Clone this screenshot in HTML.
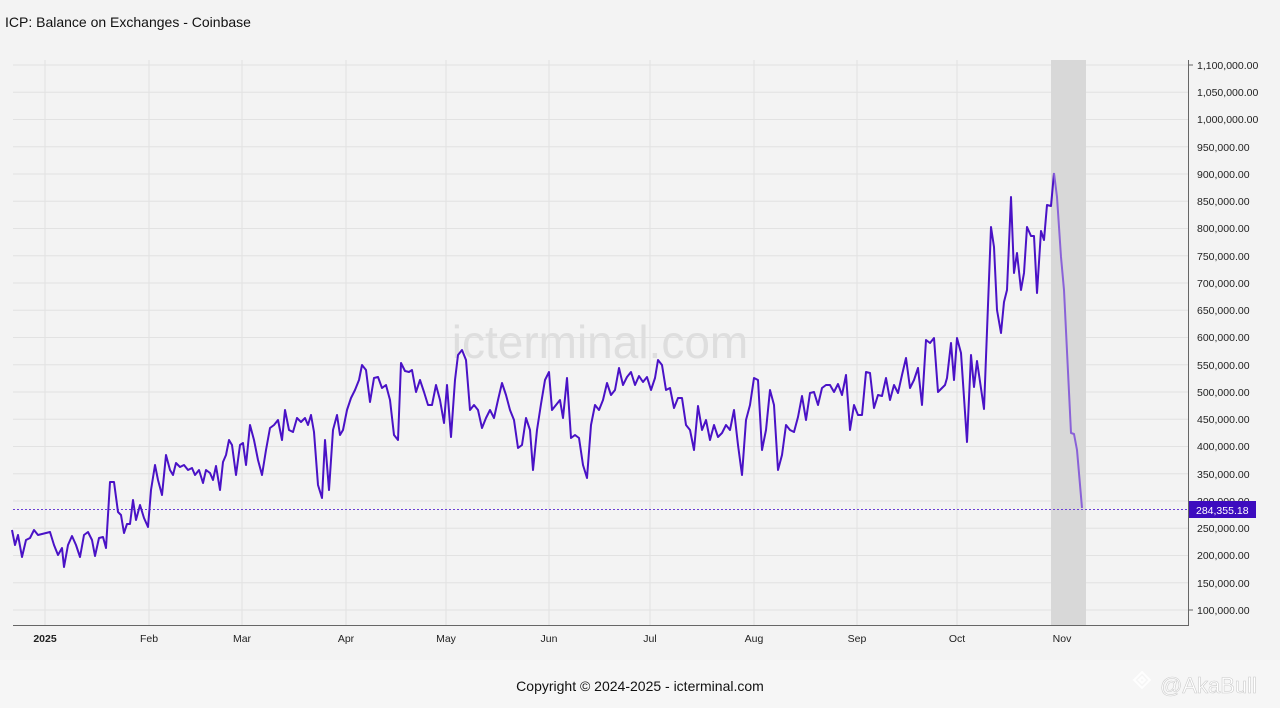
<!DOCTYPE html>
<html><head><meta charset="utf-8"><style>
html,body{margin:0;padding:0;width:1280px;height:708px;overflow:hidden;background:#f3f3f3;font-family:"Liberation Sans",sans-serif}
</style></head><body>
<svg width="1280" height="708" xmlns="http://www.w3.org/2000/svg" style="display:block">
<rect x="0" y="0" width="1280" height="660" fill="#f3f3f3"/>
<rect x="0" y="660" width="1280" height="48" fill="#f6f6f6"/>
<text x="5" y="27" font-size="14" fill="#111">ICP: Balance on Exchanges - Coinbase</text>
<g stroke="#e2e2e2" stroke-width="1">
<line x1="13" y1="65" x2="1188" y2="65"/><line x1="13" y1="92.25" x2="1188" y2="92.25"/><line x1="13" y1="119.5" x2="1188" y2="119.5"/><line x1="13" y1="146.75" x2="1188" y2="146.75"/><line x1="13" y1="174" x2="1188" y2="174"/><line x1="13" y1="201.25" x2="1188" y2="201.25"/><line x1="13" y1="228.5" x2="1188" y2="228.5"/><line x1="13" y1="255.75" x2="1188" y2="255.75"/><line x1="13" y1="283" x2="1188" y2="283"/><line x1="13" y1="310.25" x2="1188" y2="310.25"/><line x1="13" y1="337.5" x2="1188" y2="337.5"/><line x1="13" y1="364.75" x2="1188" y2="364.75"/><line x1="13" y1="392" x2="1188" y2="392"/><line x1="13" y1="419.25" x2="1188" y2="419.25"/><line x1="13" y1="446.5" x2="1188" y2="446.5"/><line x1="13" y1="473.75" x2="1188" y2="473.75"/><line x1="13" y1="501" x2="1188" y2="501"/><line x1="13" y1="528.25" x2="1188" y2="528.25"/><line x1="13" y1="555.5" x2="1188" y2="555.5"/><line x1="13" y1="582.75" x2="1188" y2="582.75"/><line x1="13" y1="610" x2="1188" y2="610"/>
<line x1="45" y1="60" x2="45" y2="625"/><line x1="149" y1="60" x2="149" y2="625"/><line x1="242" y1="60" x2="242" y2="625"/><line x1="346" y1="60" x2="346" y2="625"/><line x1="446" y1="60" x2="446" y2="625"/><line x1="549" y1="60" x2="549" y2="625"/><line x1="650" y1="60" x2="650" y2="625"/><line x1="754" y1="60" x2="754" y2="625"/><line x1="857" y1="60" x2="857" y2="625"/><line x1="957" y1="60" x2="957" y2="625"/><line x1="1062" y1="60" x2="1062" y2="625"/>
</g>
<rect x="1051" y="60" width="35" height="565" fill="#d8d8d8"/>
<text x="600" y="358" font-size="46" fill="#dedede" text-anchor="middle">icterminal.com</text>
<line x1="13" y1="625.5" x2="1189" y2="625.5" stroke="#666" stroke-width="1"/>
<line x1="1188.5" y1="60" x2="1188.5" y2="626" stroke="#666" stroke-width="1"/>
<g font-size="10.5" fill="#222">
<text x="1197" y="69">1,100,000.00</text><text x="1197" y="96">1,050,000.00</text><text x="1197" y="123">1,000,000.00</text><text x="1197" y="151">950,000.00</text><text x="1197" y="178">900,000.00</text><text x="1197" y="205">850,000.00</text><text x="1197" y="232">800,000.00</text><text x="1197" y="260">750,000.00</text><text x="1197" y="287">700,000.00</text><text x="1197" y="314">650,000.00</text><text x="1197" y="341">600,000.00</text><text x="1197" y="369">550,000.00</text><text x="1197" y="396">500,000.00</text><text x="1197" y="423">450,000.00</text><text x="1197" y="450">400,000.00</text><text x="1197" y="478">350,000.00</text><text x="1197" y="505">300,000.00</text><text x="1197" y="532">250,000.00</text><text x="1197" y="559">200,000.00</text><text x="1197" y="587">150,000.00</text><text x="1197" y="614">100,000.00</text>
</g>
<g stroke="#666"><line x1="1189" y1="65" x2="1193" y2="65"/><line x1="1189" y1="610" x2="1193" y2="610"/></g>
<g font-size="10.5" fill="#222" text-anchor="middle">
<text x="45" y="642" font-weight="bold">2025</text><text x="149" y="642">Feb</text><text x="242" y="642">Mar</text><text x="346" y="642">Apr</text><text x="446" y="642">May</text><text x="549" y="642">Jun</text><text x="650" y="642">Jul</text><text x="754" y="642">Aug</text><text x="857" y="642">Sep</text><text x="957" y="642">Oct</text><text x="1062" y="642">Nov</text>
</g>
<line x1="13" y1="509.5" x2="1189" y2="509.5" stroke="#6a3fd6" stroke-width="1" stroke-dasharray="2,2"/>
<polyline fill="none" stroke="#4a12c6" stroke-width="2" stroke-linejoin="round" points="12,530 15,545 18,535 22,557 26,540 30,538 34,530 38,535 50,532 54,545 58,555 62,548 64,567 68,545 72,536 76,545 80,557 84,535 88,532 92,540 95,556 99,538 103,537 106,548 110,482 114,482 118,512 121,515 124,533 127,524 130,524 133,500 136,520 140,505 144,518 148,527 151,490 155,465 158,480 162,495 166,455 170,470 173,475 176,463 180,467 184,465 188,470 192,468 195,475 199,470 203,483 206,470 210,473 213,480 216,466 220,490 223,462 226,455 229,440 232,445 236,475 240,445 243,443 246,465 250,425 254,440 258,460 262,475 266,450 270,428 274,425 278,420 282,440 285,410 289,430 293,432 297,418 301,422 305,418 308,425 311,415 314,432 318,485 322,498 325,440 329,490 333,430 337,415 340,435 343,430 347,410 351,398 355,390 359,380 362,365 366,370 370,402 374,378 378,377 382,388 386,385 390,400 394,435 398,440 401,363 405,371 409,372 412,370 416,392 420,380 424,392 428,405 432,405 436,385 440,400 444,423 447,385 451,437 455,380 458,355 462,350 466,360 470,410 474,405 478,410 482,428 486,418 490,410 494,418 498,400 502,383 506,395 510,410 514,420 518,448 522,445 526,418 530,430 533,470 537,430 541,404 545,380 549,372 552,410 556,405 560,400 563,418 567,378 571,438 575,435 579,438 583,465 587,478 591,425 595,405 599,410 603,400 607,383 611,395 615,390 619,368 623,385 627,377 631,372 635,385 639,376 643,382 647,377 651,390 655,378 658,360 662,365 666,390 670,388 674,408 678,398 682,398 686,425 690,430 694,450 698,406 702,430 706,420 710,440 714,425 718,437 722,433 726,425 730,430 734,410 738,445 742,475 746,420 750,405 754,378 758,380 762,450 766,430 770,390 774,405 778,470 782,455 786,425 790,430 794,432 798,417 802,396 806,420 810,393 814,392 818,405 822,388 826,385 830,385 834,392 838,384 842,395 846,375 850,430 854,405 858,415 862,415 866,372 870,373 874,408 878,395 882,396 886,378 890,400 894,385 898,393 902,375 906,358 910,388 914,380 918,368 922,405 926,340 930,343 934,338 938,392 940,390 945,385 947,378 951,343 954,380 957,338 961,353 967,442 971,355 974,387 977,361 984,409 991,227 994,247 997,310 1001,333 1004,302 1007,290 1011,197 1014,273 1017,253 1021,290 1024,273 1027,227 1031,236 1034,236 1037,293 1041,231 1044,240 1047,205 1051,206 1054,173"/>
<polyline fill="none" stroke="#8a62d8" stroke-width="2" stroke-linejoin="round" points="1054,173 1057,197 1061,257 1064,290 1071,433 1074,434 1077,450 1082,508"/>
<rect x="1189" y="501" width="67" height="17" fill="#3d0cbf"/>
<text x="1196" y="514" font-size="10.5" fill="#fff">284,355.18</text>
<text x="640" y="691" font-size="14" fill="#111" text-anchor="middle">Copyright © 2024-2025 - icterminal.com</text>
<g fill="none" stroke="#fff" stroke-width="2" opacity="0.9"><path d="M1142,672 l8,8 -8,8 -8,-8z M1142,677 l3,3 -3,3 -3,-3z"/></g>
<text x="1160" y="693" font-size="22" fill="#fff" stroke="#ccc" stroke-width="0.6">@AkaBull</text>
</svg>
</body></html>
